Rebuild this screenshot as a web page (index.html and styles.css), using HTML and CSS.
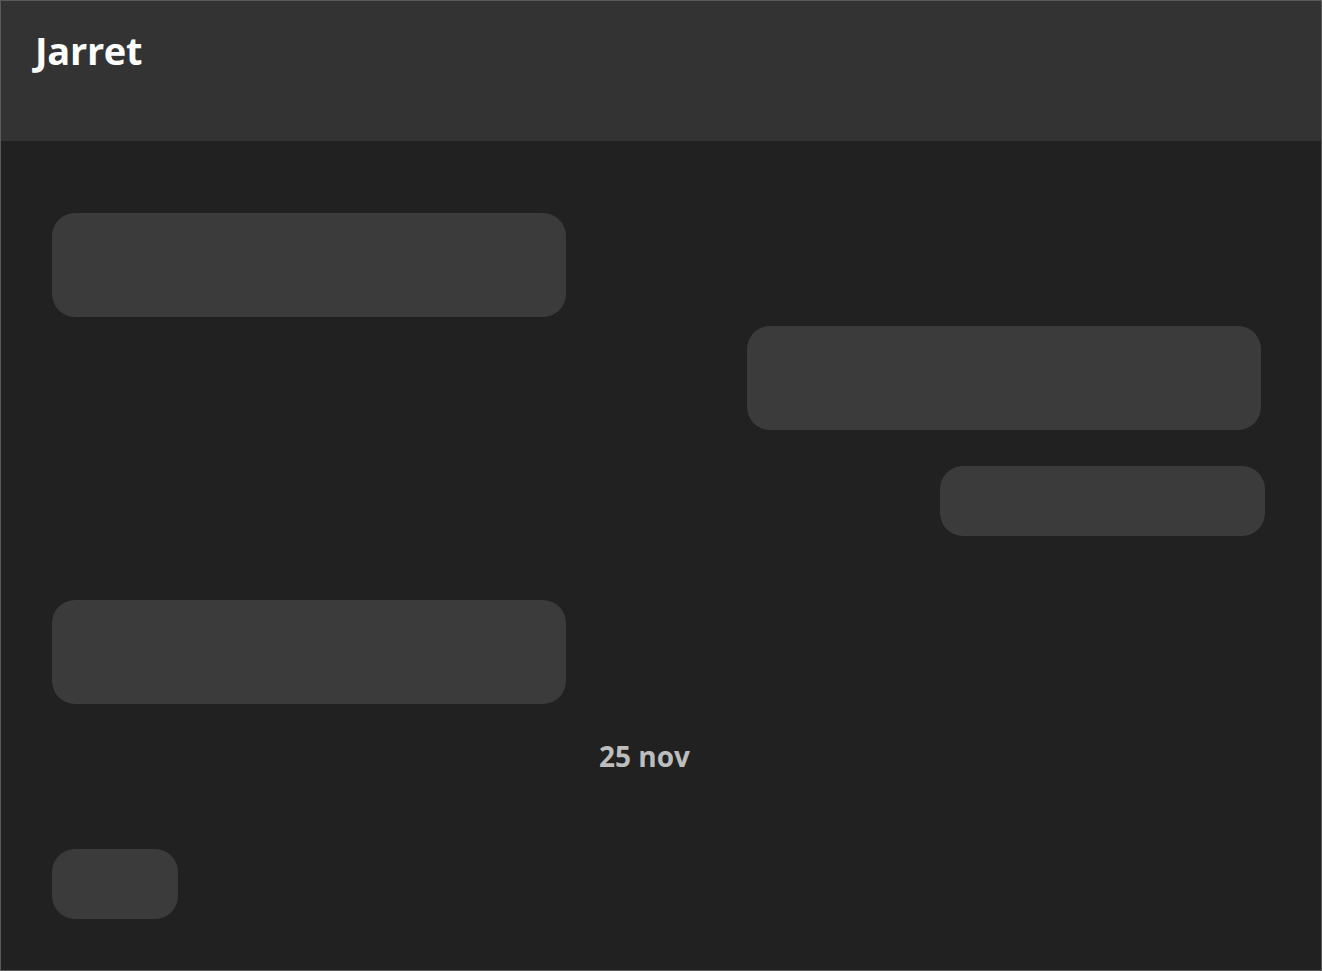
FILE: index.html
```html
<!DOCTYPE html>
<html>
<head>
<meta charset="utf-8">
<link rel="stylesheet" href="styles.css">
</head>
<body>
<div class="app">
  <header class="header">
    <h1 class="title">Jarret</h1>
  </header>
  <main class="messages">
    <div class="bubble left large b1"></div>
    <div class="bubble right large b2"></div>
    <div class="bubble right small b3"></div>
    <div class="bubble left large b4"></div>
    <div class="date">25 nov</div>
    <div class="bubble left tiny b5"></div>
  </main>
</div>
</body>
</html>
```
FILE: styles.css
```css
html, body {
  margin: 0;
  padding: 0;
  background: #212121;
}
.app {
  box-sizing: border-box;
  width: 1322px;
  height: 971px;
  border: 1px solid #5a5a5a;
  background: #212121;
  display: flex;
  flex-direction: column;
  overflow: hidden;
}
.header {
  height: 140px;
  background: #333333;
  padding: 0 0 0 34px;
  flex: none;
}
.title {
  margin: 0;
  padding-top: 23px;
  font-family: "Open Sans", sans-serif;
  font-weight: 700;
  font-size: 38px;
  line-height: 52px;
  color: #ffffff;
  letter-spacing: -0.3px;
}
.messages {
  flex: 1;
  display: flex;
  flex-direction: column;
  padding: 72px 0 0 51px;
}
.bubble {
  background: #3b3b3b;
  border-radius: 23px;
  flex: none;
}
.large { width: 514px; height: 104px; }
.small { width: 325px; height: 70px; }
.tiny { width: 126px; height: 70px; }
.right { align-self: flex-end; }
.b2 { margin-top: 9px; margin-right: 60px; }
.b3 { margin-top: 36px; margin-right: 56px; }
.b4 { margin-top: 64px; }
.date {
  align-self: center;
  margin-top: 33px;
  margin-left: -84px;
  font-family: "Open Sans", sans-serif;
  font-weight: 700;
  font-size: 28px;
  line-height: 38px;
  color: #bdbdbd;
}
.b5 { margin-top: 74px; }
```
